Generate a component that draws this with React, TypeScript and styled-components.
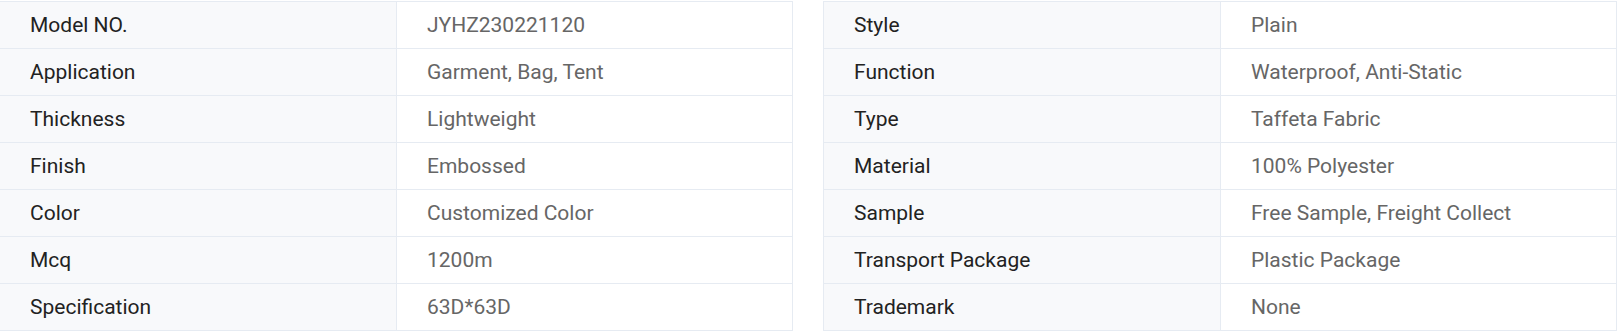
import styled, { createGlobalStyle } from 'styled-components';

const GlobalStyle = createGlobalStyle`
  body {
    margin: 0;
    background: #ffffff;
    font-family: Roboto, 'Liberation Sans', sans-serif;
  }
`;

const Page = styled.div`
  display: grid;
  grid-template-columns: 794px 794px;
  column-gap: 30px;
  margin: 1px 0 0 -1px;
`;

const Table = styled.div`
  display: grid;
  grid-template-columns: 397px 1fr;
  border: 1px solid #e6ebf2;
  border-bottom: none;
`;

interface CellProps {
  $label?: boolean;
}

const Cell = styled.div<CellProps>`
  height: 46px;
  display: flex;
  align-items: center;
  padding-left: 30px;
  border-bottom: 1px solid #e6ebf2;
  border-right: ${(props) => (props.$label ? '1px solid #e6ebf2' : 'none')};
  background: ${(props) => (props.$label ? '#f8f9fb' : '#ffffff')};
  color: ${(props) => (props.$label ? '#222222' : '#666666')};
  font-size: 21px;
  white-space: nowrap;
`;

const leftRows: [string, string][] = [
  ['Model NO.', 'JYHZ230221120'],
  ['Application', 'Garment, Bag, Tent'],
  ['Thickness', 'Lightweight'],
  ['Finish', 'Embossed'],
  ['Color', 'Customized Color'],
  ['Mcq', '1200m'],
  ['Specification', '63D*63D'],
];

const rightRows: [string, string][] = [
  ['Style', 'Plain'],
  ['Function', 'Waterproof, Anti-Static'],
  ['Type', 'Taffeta Fabric'],
  ['Material', '100% Polyester'],
  ['Sample', 'Free Sample, Freight Collect'],
  ['Transport Package', 'Plastic Package'],
  ['Trademark', 'None'],
];

function SpecTable({ rows }: { rows: [string, string][] }) {
  return (
    <Table>
      {rows.map(([label, value]) => [
        <Cell $label key={label}>
          {label}
        </Cell>,
        <Cell key={label + '-v'}>{value}</Cell>,
      ])}
    </Table>
  );
}

export default function App() {
  return (
    <>
      <GlobalStyle />
      <Page>
        <SpecTable rows={leftRows} />
        <SpecTable rows={rightRows} />
      </Page>
    </>
  );
}
